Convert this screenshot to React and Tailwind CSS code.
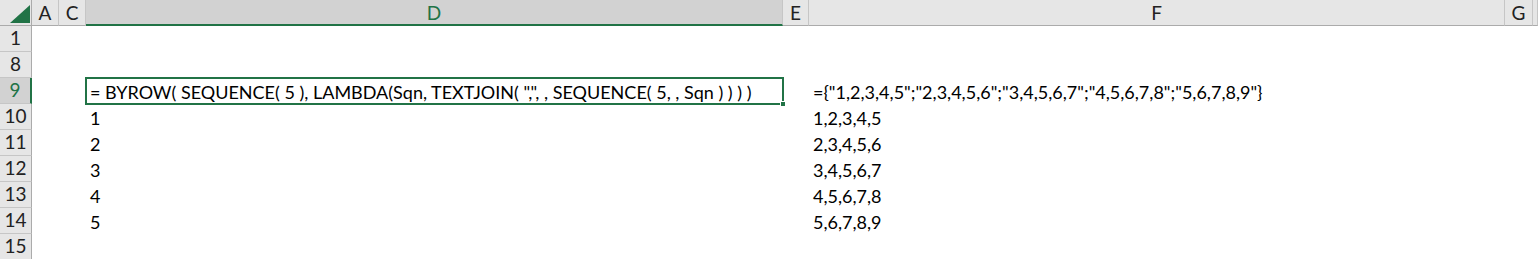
import React from 'react';

const cols = [
  { key: 'A', label: 'A' },
  { key: 'C', label: 'C' },
  { key: 'D', label: 'D', active: true },
  { key: 'E', label: 'E' },
  { key: 'F', label: 'F' },
  { key: 'G', label: 'G' },
  { key: 'H', label: '' },
];

const formula = '= BYROW( SEQUENCE( 5 ), LAMBDA(Sqn, TEXTJOIN( ",", , SEQUENCE( 5, , Sqn ) ) ) )';
const spill = '={"1,2,3,4,5";"2,3,4,5,6";"3,4,5,6,7";"4,5,6,7,8";"5,6,7,8,9"}';

const rows = [
  { n: 1, D: '', F: '' },
  { n: 8, D: '', F: '' },
  { n: 9, D: formula, F: spill, active: true },
  { n: 10, D: '1', F: '1,2,3,4,5' },
  { n: 11, D: '2', F: '2,3,4,5,6' },
  { n: 12, D: '3', F: '3,4,5,6,7' },
  { n: 13, D: '4', F: '4,5,6,7,8' },
  { n: 14, D: '5', F: '5,6,7,8,9' },
  { n: 15, D: '', F: '' },
];

const font = { fontFamily: 'Lato, "Open Sans", sans-serif' };

function Corner() {
  return (
    <div className="h-[26px] bg-[#e6e6e6] border-b border-r border-[#ababab] flex items-end justify-end pr-[1px] pb-[2px]">
      <svg width="20" height="18" viewBox="0 0 20 18">
        <polygon points="20,0 20,18 0,18" fill="#217346" />
      </svg>
    </div>
  );
}

function ColHeader({ col }) {
  if (col.active) {
    return (
      <div className="h-[26px] bg-[#d2d2d2] border-r border-[#c6c6c6] border-b-2 border-b-[#217346] flex items-center justify-center text-[19px] text-[#217346] pt-[2px]">
        {col.label}
      </div>
    );
  }
  return (
    <div className="h-[26px] bg-[#e6e6e6] border-r border-[#c6c6c6] border-b border-b-[#ababab] flex items-center justify-center text-[19px] text-[#222] pt-[1px]">
      {col.label}
    </div>
  );
}

function RowHeader({ row }) {
  if (row.active) {
    return (
      <div className="h-[26px] bg-[#d2d2d2] border-b border-[#c6c6c6] border-r-2 border-r-[#217346] flex items-center justify-center text-[19px] text-[#217346]">
        {row.n}
      </div>
    );
  }
  return (
    <div className="h-[26px] bg-[#e6e6e6] border-b border-[#c6c6c6] border-r border-r-[#ababab] flex items-center justify-center text-[19px] text-[#222]">
      {row.n}
    </div>
  );
}

function Cell({ text, selected }) {
  return (
    <div className="h-[26px] relative flex items-end pl-[4px] pb-[1px] text-[18px] text-black whitespace-nowrap">
      {selected && (
        <div className="absolute left-[-1px] top-[-1px] right-[-1px] bottom-[-1px] border-2 border-[#217346] pointer-events-none">
          <div className="absolute right-[-4px] bottom-[-4px] w-[6px] h-[6px] bg-[#217346] border border-white" />
        </div>
      )}
      <span className="leading-[22px]">{text}</span>
    </div>
  );
}

export default function App() {
  return (
    <div className="w-[1538px] h-[259px] overflow-hidden bg-white" style={font}>
      <div className="grid grid-cols-[32px_27px_27px_697px_26px_696px_28px_1fr]">
        <Corner />
        {cols.map(c => (
          <ColHeader key={c.key} col={c} />
        ))}
        {rows.map(r => (
          <React.Fragment key={r.n}>
            <RowHeader row={r} />
            <Cell text="" />
            <Cell text="" />
            <Cell text={r.D} selected={r.active} />
            <Cell text="" />
            <Cell text={r.F} />
            <Cell text="" />
            <Cell text="" />
          </React.Fragment>
        ))}
      </div>
    </div>
  );
}
